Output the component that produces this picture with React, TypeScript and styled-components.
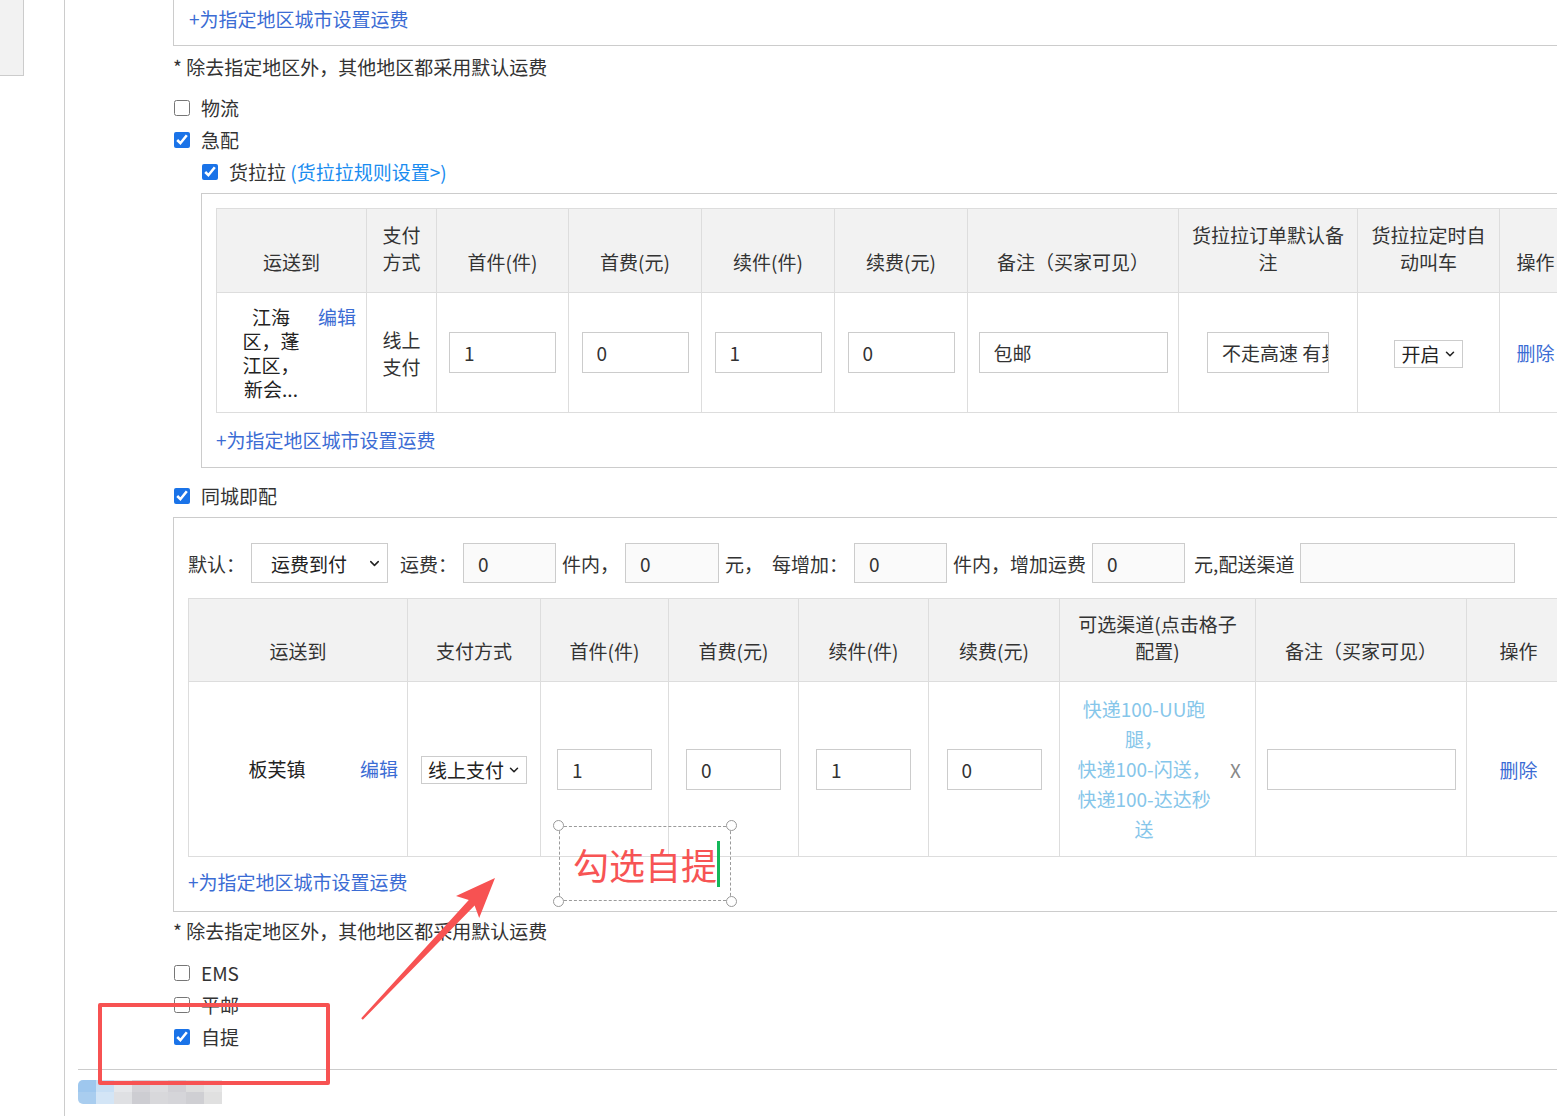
import React from "react";
import styled, { createGlobalStyle } from "styled-components";
import { ChevronDown } from "lucide-react";

const GlobalStyle = createGlobalStyle`
  html, body {
    margin: 0;
    padding: 0;
    background: #ffffff;
  }
  body {
    width: 1557px;
    height: 1116px;
    overflow: hidden;
    font-family: "Noto Sans CJK SC", "Noto Sans", sans-serif;
    font-size: 19px;
    color: #333333;
  }
`;

const table1Cols = [150, 70, 132, 133, 133, 133, 211, 179, 142, 72];
const table1Heads = [
    "运送到",
    "支付\n方式",
    "首件(件)",
    "首费(元)",
    "续件(件)",
    "续费(元)",
    "备注（买家可见）",
    "货拉拉订单默认备\n注",
    "货拉拉定时自\n动叫车",
    "操作",
];

const table2Cols = [219, 133, 128, 130, 130, 131, 196, 211, 104];
const table2Heads = [
    "运送到",
    "支付方式",
    "首件(件)",
    "首费(元)",
    "续件(件)",
    "续费(元)",
    "可选渠道(点击格子\n配置)",
    "备注（买家可见）",
    "操作",
];

const mosaic = [
    "#9ec7ee", "#c8dff5", "#e6e7ea", "#d3d2d7", "#dcdcdf", "#d1d0d5", "#dddddd", "#e5e5e5",
    "#a9cdef", "#d3e5f6", "#dfe0e3", "#cdcdd2", "#d8d8db", "#d5d5d9", "#cfcfd3", "#e0e0e0",
];

const App = () => {
    return (
        <Page>
            <GlobalStyle />
            <Sidebar>
                <SideTab />
            </Sidebar>

            <Main>
                <Content>
                    <TopBox>
                        <AddLink>+为指定地区城市设置运费</AddLink>
                    </TopBox>
                    <Note $top={8}>* 除去指定地区外，其他地区都采用默认运费</Note>

                    <CheckList>
                        <CheckRow>
                            <Check type="checkbox" />
                            <span>物流</span>
                        </CheckRow>
                        <CheckRow>
                            <Check type="checkbox" defaultChecked />
                            <span>急配</span>
                        </CheckRow>
                        <CheckRow $indent={28}>
                            <Check type="checkbox" defaultChecked />
                            <span>
                                货拉拉 <RuleLink>(货拉拉规则设置&gt;)</RuleLink>
                            </span>
                        </CheckRow>
                    </CheckList>

                    <Panel $indent={28} $padTop={14} $padBottom={14}>
                        <Table>
                            <colgroup>
                                {table1Cols.map((w, i) => (
                                    <Col key={i} $w={w} />
                                ))}
                            </colgroup>
                            <thead>
                                <tr>
                                    {table1Heads.map((h) => (
                                        <Th key={h}>{h}</Th>
                                    ))}
                                </tr>
                            </thead>
                            <tbody>
                                <tr>
                                    <Td $h={119}>
                                        <Dest>
                                            <DestName $w={64} $lh={24}>
                                                江海<br />区，蓬<br />江区，<br />新会...
                                            </DestName>
                                            <EditLink $lh={24}>编辑</EditLink>
                                        </Dest>
                                    </Td>
                                    <Td>
                                        <Stack>线上<br />支付</Stack>
                                    </Td>
                                    <Td><Field $w={107} defaultValue="1" /></Td>
                                    <Td><Field $w={107} defaultValue="0" /></Td>
                                    <Td><Field $w={107} defaultValue="1" /></Td>
                                    <Td><Field $w={107} defaultValue="0" /></Td>
                                    <Td><Field $w={189} defaultValue="包邮" /></Td>
                                    <Td><Field $w={122} defaultValue="不走高速 有其他要求请备注" /></Td>
                                    <Td>
                                        <SmallSelect>
                                            开启
                                            <ChevronDown size={14} strokeWidth={2.6} />
                                        </SmallSelect>
                                    </Td>
                                    <Td><ActionLink>删除</ActionLink></Td>
                                </tr>
                            </tbody>
                        </Table>
                        <AddLink $top={14}>+为指定地区城市设置运费</AddLink>
                    </Panel>

                    <CheckList $top={12}>
                        <CheckRow>
                            <Check type="checkbox" defaultChecked />
                            <span>同城即配</span>
                        </CheckRow>
                    </CheckList>

                    <Panel $indent={0} $padTop={25} $padBottom={16}>
                        <DefaultRow>
                            <span>默认：</span>
                            <WideSelect>
                                运费到付
                                <ChevronDown size={15} strokeWidth={2.4} />
                            </WideSelect>
                            <span>运费：</span>
                            <Field $w={93} $h={40} $soft defaultValue="0" />
                            <span>件内，</span>
                            <Field $w={94} $h={40} $soft defaultValue="0" />
                            <span>元，</span>
                            <Spaced>每增加：</Spaced>
                            <Field $w={93} $h={40} $soft defaultValue="0" />
                            <span>件内，增加运费</span>
                            <Field $w={93} $h={40} $soft defaultValue="0" />
                            <Spaced>元,配送渠道</Spaced>
                            <Field $w={215} $h={40} $soft defaultValue="" />
                        </DefaultRow>

                        <Table $top={15}>
                            <colgroup>
                                {table2Cols.map((w, i) => (
                                    <Col key={i} $w={w} />
                                ))}
                            </colgroup>
                            <thead>
                                <tr>
                                    {table2Heads.map((h) => (
                                        <Th key={h} $padTop={11} $padBottom={17}>{h}</Th>
                                    ))}
                                </tr>
                            </thead>
                            <tbody>
                                <tr>
                                    <Td $h={174}>
                                        <Dest>
                                            <DestName $w={132} $lh={26}>板芙镇</DestName>
                                            <EditLink $lh={26} $gap={17}>编辑</EditLink>
                                        </Dest>
                                    </Td>
                                    <Td>
                                        <SmallSelect>
                                            线上支付
                                            <ChevronDown size={14} strokeWidth={2.6} />
                                        </SmallSelect>
                                    </Td>
                                    <Td><Field $w={95} defaultValue="1" /></Td>
                                    <Td><Field $w={95} defaultValue="0" /></Td>
                                    <Td><Field $w={95} defaultValue="1" /></Td>
                                    <Td><Field $w={95} defaultValue="0" /></Td>
                                    <Td>
                                        <Channels>
                                            <ChannelText>
                                                快递100-UU跑<br />腿，<br />快递100-闪送，<br />快递100-达达秒<br />送
                                            </ChannelText>
                                            <RemoveMark>X</RemoveMark>
                                        </Channels>
                                    </Td>
                                    <Td><Field $w={189} defaultValue="" /></Td>
                                    <Td><ActionLink>删除</ActionLink></Td>
                                </tr>
                            </tbody>
                        </Table>
                        <AddLink $top={12}>+为指定地区城市设置运费</AddLink>
                    </Panel>

                    <Note $top={6}>* 除去指定地区外，其他地区都采用默认运费</Note>

                    <CheckList $top={13}>
                        <CheckRow>
                            <Check type="checkbox" />
                            <span>EMS</span>
                        </CheckRow>
                        <CheckRow>
                            <Check type="checkbox" />
                            <span>平邮</span>
                        </CheckRow>
                        <CheckRow>
                            <Check type="checkbox" defaultChecked />
                            <span>自提</span>
                        </CheckRow>
                    </CheckList>
                </Content>

                <FooterBar>
                    <Mosaic>
                        {mosaic.map((c, i) => (
                            <MosaicCell key={i} $c={c} />
                        ))}
                    </Mosaic>
                </FooterBar>
            </Main>

            {/* screenshot annotations */}
            <HighlightBox />
            <ArrowLayer width="1557" height="1116" viewBox="0 0 1557 1116">
                <polygon
                    points="361.2,1018.2 468.8,900 456,896 495,878 479.2,918.1 474.6,905.4 362.8,1019.8"
                    fill="#f75252"
                />
            </ArrowLayer>
            <TextNote>
                <NoteText>勾选自提</NoteText>
                <Caret />
                <Handle $x="left" $y="top" />
                <Handle $x="right" $y="top" />
                <Handle $x="left" $y="bottom" />
                <Handle $x="right" $y="bottom" />
            </TextNote>
        </Page>
    );
};

export default App;

// Styled components
const Page = styled.div`
    position: relative;
    display: flex;
    width: 1557px;
    height: 1116px;
    overflow: hidden;
`;

const Sidebar = styled.aside`
    flex: 0 0 64px;
    border-right: 1px solid #cccccc;
`;

const SideTab = styled.div`
    width: 24px;
    height: 76px;
    box-sizing: border-box;
    background: #f2f2f2;
    border-right: 1px solid #cccccc;
    border-bottom: 1px solid #cccccc;
`;

const Main = styled.main`
    flex: 1;
    min-width: 0;
    padding-left: 13px;
`;

const Content = styled.div`
    padding-left: 95px;
`;

const TopBox = styled.div`
    width: 1420px;
    height: 46px;
    box-sizing: border-box;
    padding: 6px 0 0 15px;
    border-left: 1px solid #cccccc;
    border-bottom: 1px solid #cccccc;
`;

const AddLink = styled.div<{ $top?: number }>`
    margin-top: ${(p) => p.$top ?? 0}px;
    line-height: 26px;
    color: #3b6cd4;
    cursor: pointer;
`;

const Note = styled.div<{ $top: number }>`
    margin-top: ${(p) => p.$top}px;
    line-height: 26px;
    color: #333333;
`;

const CheckList = styled.div<{ $top?: number }>`
    margin-top: ${(p) => p.$top ?? 12}px;
    display: flex;
    flex-direction: column;
`;

const CheckRow = styled.label<{ $indent?: number }>`
    display: flex;
    align-items: center;
    gap: 11px;
    height: 32px;
    margin-left: ${(p) => (p.$indent ?? 0) + 1}px;
    line-height: 32px;
    white-space: nowrap;
`;

const Check = styled.input`
    width: 16px;
    height: 16px;
    margin: 0;
    accent-color: #1a73e8;
`;

const RuleLink = styled.span`
    color: #1a8cf0;
    cursor: pointer;
`;

const Panel = styled.section<{ $indent: number; $padTop: number; $padBottom: number }>`
    width: max-content;
    margin-top: 5px;
    margin-left: ${(p) => p.$indent}px;
    padding: ${(p) => p.$padTop}px 14px ${(p) => p.$padBottom}px 14px;
    border: 1px solid #cccccc;
`;

const Table = styled.table<{ $top?: number }>`
    margin-top: ${(p) => p.$top ?? 0}px;
    border-collapse: collapse;
    table-layout: fixed;
    width: max-content;
`;

const Col = styled.col<{ $w: number }>`
    width: ${(p) => p.$w}px;
`;

const Th = styled.th<{ $padTop?: number; $padBottom?: number }>`
    padding: ${(p) => p.$padTop ?? 12}px 8px ${(p) => p.$padBottom ?? 17}px;
    background: #f2f2f2;
    border: 1px solid #dddddd;
    font-weight: normal;
    line-height: 27px;
    text-align: center;
    vertical-align: bottom;
    white-space: pre-line;
    color: #333333;
`;

const Td = styled.td<{ $h?: number }>`
    height: ${(p) => (p.$h ? `${p.$h}px` : "auto")};
    padding: 0;
    border: 1px solid #dddddd;
    text-align: center;
    vertical-align: middle;
`;

const Dest = styled.div`
    display: flex;
    align-items: flex-start;
    padding-left: 22px;
    text-align: center;
`;

const DestName = styled.div<{ $w: number; $lh: number }>`
    width: ${(p) => p.$w}px;
    line-height: ${(p) => p.$lh}px;
    color: #222222;
`;

const EditLink = styled.span<{ $lh: number; $gap?: number }>`
    margin-left: ${(p) => p.$gap ?? 15}px;
    line-height: ${(p) => p.$lh}px;
    color: #3b6cd4;
    cursor: pointer;
    white-space: nowrap;
`;

const Stack = styled.div`
    line-height: 27px;
`;

const Field = styled.input<{ $w: number; $h?: number; $soft?: boolean }>`
    width: ${(p) => p.$w}px;
    height: ${(p) => p.$h ?? 41}px;
    box-sizing: border-box;
    padding: 0 0 0 14px;
    border: 1px solid #cccccc;
    border-radius: 0;
    background: ${(p) => (p.$soft ? "#fafafa" : "#ffffff")};
    font: inherit;
    color: #333333;
    outline: none;
    vertical-align: middle;
`;

const SmallSelect = styled.div`
    display: inline-flex;
    align-items: center;
    gap: 3px;
    height: 28px;
    box-sizing: border-box;
    padding: 0 5px 0 6px;
    border: 1px solid #cccccc;
    background: #ffffff;
    line-height: 26px;
    color: #222222;
    vertical-align: middle;
`;

const WideSelect = styled.div`
    display: flex;
    align-items: center;
    justify-content: space-between;
    width: 137px;
    height: 40px;
    box-sizing: border-box;
    margin-right: 6px;
    padding: 0 5px 0 19px;
    border: 1px solid #cccccc;
    background: #ffffff;
    color: #222222;
`;

const DefaultRow = styled.div`
    display: flex;
    align-items: center;
    gap: 6px;
    height: 40px;
    white-space: nowrap;
    color: #333333;
`;

const Spaced = styled.span`
    margin-left: 3px;
`;

const ActionLink = styled.span`
    color: #3b6cd4;
    cursor: pointer;
`;

const Channels = styled.div`
    display: flex;
    align-items: center;
    padding: 0 14px 0 10px;
`;

const ChannelText = styled.div`
    flex: 1;
    line-height: 30px;
    color: #86c6ea;
    text-align: center;
    cursor: pointer;
`;

const RemoveMark = styled.span`
    margin-left: 12px;
    color: #888888;
    cursor: pointer;
`;

const FooterBar = styled.div`
    margin-top: 16px;
    padding-top: 10px;
    border-top: 1px solid #cccccc;
`;

const Mosaic = styled.div`
    display: grid;
    grid-template-columns: repeat(8, 18px);
    grid-auto-rows: 12px;
    width: max-content;
    border-radius: 5px 0 0 5px;
    overflow: hidden;
    filter: blur(0.6px);
`;

const MosaicCell = styled.div<{ $c: string }>`
    background: ${(p) => p.$c};
`;

const HighlightBox = styled.div`
    position: absolute;
    left: 98px;
    top: 1003px;
    width: 232px;
    height: 82px;
    box-sizing: border-box;
    border: 4px solid #f75252;
    border-radius: 2px;
    pointer-events: none;
`;

const ArrowLayer = styled.svg`
    position: absolute;
    left: 0;
    top: 0;
    pointer-events: none;
`;

const TextNote = styled.div`
    position: absolute;
    left: 559px;
    top: 826px;
    width: 172px;
    height: 75px;
    box-sizing: border-box;
    display: flex;
    align-items: center;
    padding-left: 13px;
    border: 1.5px dashed #9a9a9a;
`;

const NoteText = styled.span`
    font-size: 36px;
    line-height: 44px;
    color: #f75454;
    letter-spacing: 0;
`;

const Caret = styled.span`
    width: 3px;
    height: 46px;
    background: #14b85a;
`;

const Handle = styled.span<{ $x: "left" | "right"; $y: "top" | "bottom" }>`
    position: absolute;
    ${(p) => p.$x}: -7px;
    ${(p) => p.$y}: -7px;
    width: 9px;
    height: 9px;
    border: 1.5px solid #999999;
    border-radius: 50%;
    background: #ffffff;
`;
